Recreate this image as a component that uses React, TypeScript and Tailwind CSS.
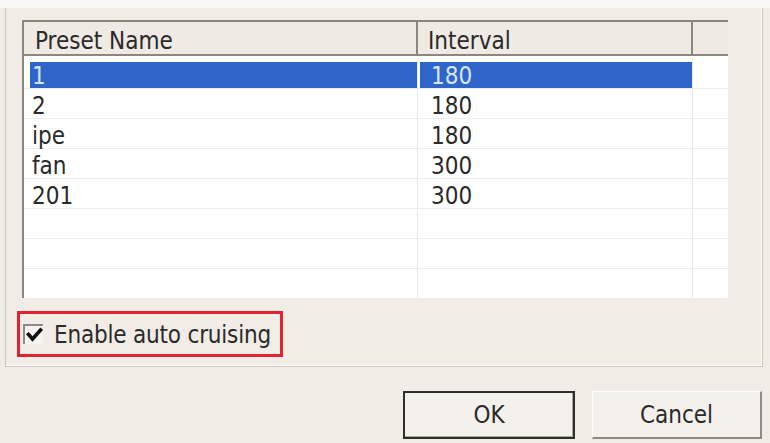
import React from 'react';

type Preset = { name: string; interval: string };

const presets: Preset[] = [
  { name: '1', interval: '180' },
  { name: '2', interval: '180' },
  { name: 'ipe', interval: '180' },
  { name: 'fan', interval: '300' },
  { name: '201', interval: '300' },
  { name: '', interval: '' },
  { name: '', interval: '' },
  { name: '', interval: '' },
];

const font = { fontFamily: '"DejaVu Sans Condensed", "DejaVu Sans", "Liberation Sans", sans-serif' };

function CheckMark() {
  return (
    <svg width="18" height="18" viewBox="0 0 18 18" className="block">
      <path d="M3.5 8.5 L7.5 13 L15.5 4" fill="none" stroke="#111" strokeWidth="3.6" strokeLinecap="square" />
    </svg>
  );
}

export default function App() {
  return (
    <div className="w-[770px] h-[443px] bg-[#f1ede6] overflow-hidden text-[24px] text-[#2a2a2a]" style={font}>
      <div className="h-[8px] bg-[#f9f8f6]" />

      {/* group frame */}
      <div className="ml-[5px] w-[758px] h-[359px] border border-t-0 border-[#cbc7be] shadow-[inset_-1px_-1px_0_#ffffff] pl-[11px] pt-[12px]">
        {/* list view */}
        <div className="ml-[5px] w-[706px] h-[278px] bg-white border-l-2 border-t-2 border-[#8a8781] overflow-hidden">
          <div className="flex h-[34px] bg-[#efebe4] border-b-2 border-[#8a8781] leading-[30px]">
            <div className="w-[394px] pl-[11px] pt-[4px] border-r-2 border-[#8a8781]">Preset Name</div>
            <div className="w-[275px] pl-[10px] pt-[4px] border-r-2 border-[#8a8781]">Interval</div>
            <div className="flex-1" />
          </div>
          <div className="h-[3px]" />
          {presets.map((p, i) => {
            const selected = i === 0;
            return (
              <div key={i} className="flex h-[30px] border-b border-[#ececea]">
                <div className="w-[394px] pl-[6px] pt-[3px] border-r border-[#e8e8e6]">
                  <div
                    className={`h-[26px] pl-[2px] pt-[1px] leading-[26px] ${selected ? 'bg-[#2f65c8] text-[#d8e4fb]' : ''}`}
                  >
                    {p.name}
                  </div>
                </div>
                <div className="w-[275px] pl-[2px] pt-[3px] border-r border-[#e8e8e6]">
                  <div
                    className={`h-[26px] pl-[11px] pt-[1px] leading-[26px] ${selected ? 'bg-[#2f65c8] text-[#d8e4fb]' : ''}`}
                  >
                    {p.interval}
                  </div>
                </div>
                <div className="flex-1" />
              </div>
            );
          })}
        </div>

        {/* highlighted checkbox */}
        <div className="mt-[13px] w-[266px] h-[46px] border-[3px] border-[#e2232d] flex items-center pl-[3px]">
          <div className="w-[20px] h-[20px] border-l-2 border-t-2 border-[#8d8b86] bg-[#f6f4f0] flex items-center justify-center">
            <CheckMark />
          </div>
          <span className="ml-[11px] leading-[30px] pt-[2px] tracking-[-0.2px]">Enable auto cruising</span>
        </div>
      </div>

      {/* buttons */}
      <div className="flex gap-[17px] pl-[403px] pt-[24px]">
        <button className="w-[172px] h-[48px] bg-[#f4f1ec] border-2 border-[#2e2e2e] shadow-[inset_-1px_-1px_0_#a9a59d] leading-[44px] text-center">
          OK
        </button>
        <button className="w-[170px] h-[48px] bg-[#f4f1ec] border-t border-l border-[#ffffff] border-r-2 border-b-2 border-r-[#8f8b84] border-b-[#8f8b84] leading-[44px] text-center">
          Cancel
        </button>
      </div>
    </div>
  );
}
